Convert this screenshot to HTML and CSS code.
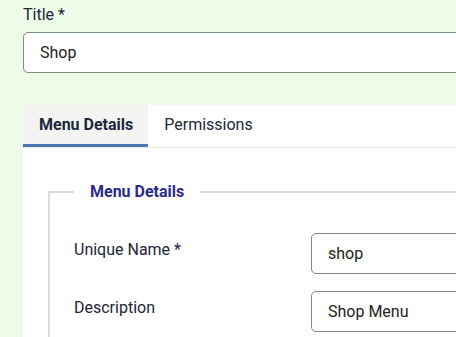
FILE: index.html
```html
<!DOCTYPE html>
<html lang="en">
<head>
    <meta charset="UTF-8">
    <meta name="viewport" content="width=device-width, initial-scale=1.0">
    <title>Edit Menu</title>
    <link rel="stylesheet" href="styles.css">
</head>
<body>
    <div class="page">
        <div class="title-field">
            <label class="title-label" for="title">Title *</label>
            <input type="text" id="title" class="field-input" value="Shop">
        </div>

        <div class="card">
            <div class="tabs">
                <button class="tab active">Menu Details</button>
                <button class="tab">Permissions</button>
            </div>
            <div class="tab-body">
                <fieldset class="details">
                    <legend>Menu Details</legend>
                    <div class="row">
                        <label for="menutype">Unique Name *</label>
                        <input type="text" id="menutype" class="field-input" value="shop">
                    </div>
                    <div class="row">
                        <label for="description">Description</label>
                        <input type="text" id="description" class="field-input" value="Shop Menu">
                    </div>
                </fieldset>
            </div>
        </div>
    </div>
</body>
</html>
```

FILE: styles.css
```css
body {
    margin: 0;
    background-color: #edfbe9;
    font-family: Roboto, "Liberation Sans", sans-serif;
    font-size: 16px;
    color: #22263a;
    overflow: hidden;
}
.page {
    width: 640px;
    height: 337px;
    padding: 3px 0 0 23px;
}
.title-field {
    display: flex;
    flex-direction: column;
    gap: 5px;
}
.title-label {
    line-height: 24px;
}
.field-input {
    box-sizing: border-box;
    height: 41px;
    padding: 0 16px;
    border: 1px solid #7a907a;
    border-radius: 5px;
    font-family: inherit;
    font-size: 16px;
    color: #222;
    background-color: #fff;
}
.card {
    margin-top: 32px;
    background-color: #fff;
}
.tabs {
    display: flex;
    border-bottom: 1px solid #e8e9e5;
}
.tab {
    height: 42px;
    padding: 0 15px 0 16px;
    border: none;
    border-bottom: 3px solid transparent;
    background: none;
    font-family: inherit;
    font-size: 16px;
    color: #22263a;
}
.tab.active {
    background-color: #f4f5f2;
    border-bottom-color: #4e77b5;
    font-weight: bold;
    color: #1c2740;
}
.tab-body {
    padding: 34px 0 20px 25px;
}
.details {
    margin: 0;
    padding: 32px 0 0 24px;
    border: 1px solid #dcddd2;
    border-width: 2px 0 0 2px;
}
.details legend {
    margin-left: 0;
    padding: 0 16px;
    font-weight: bold;
    color: #2b2a8c;
}
.row {
    display: grid;
    grid-template-columns: 237px 1fr;
    margin-bottom: 17px;
}
.row label {
    padding-top: 7px;
    line-height: 20px;
}
```
